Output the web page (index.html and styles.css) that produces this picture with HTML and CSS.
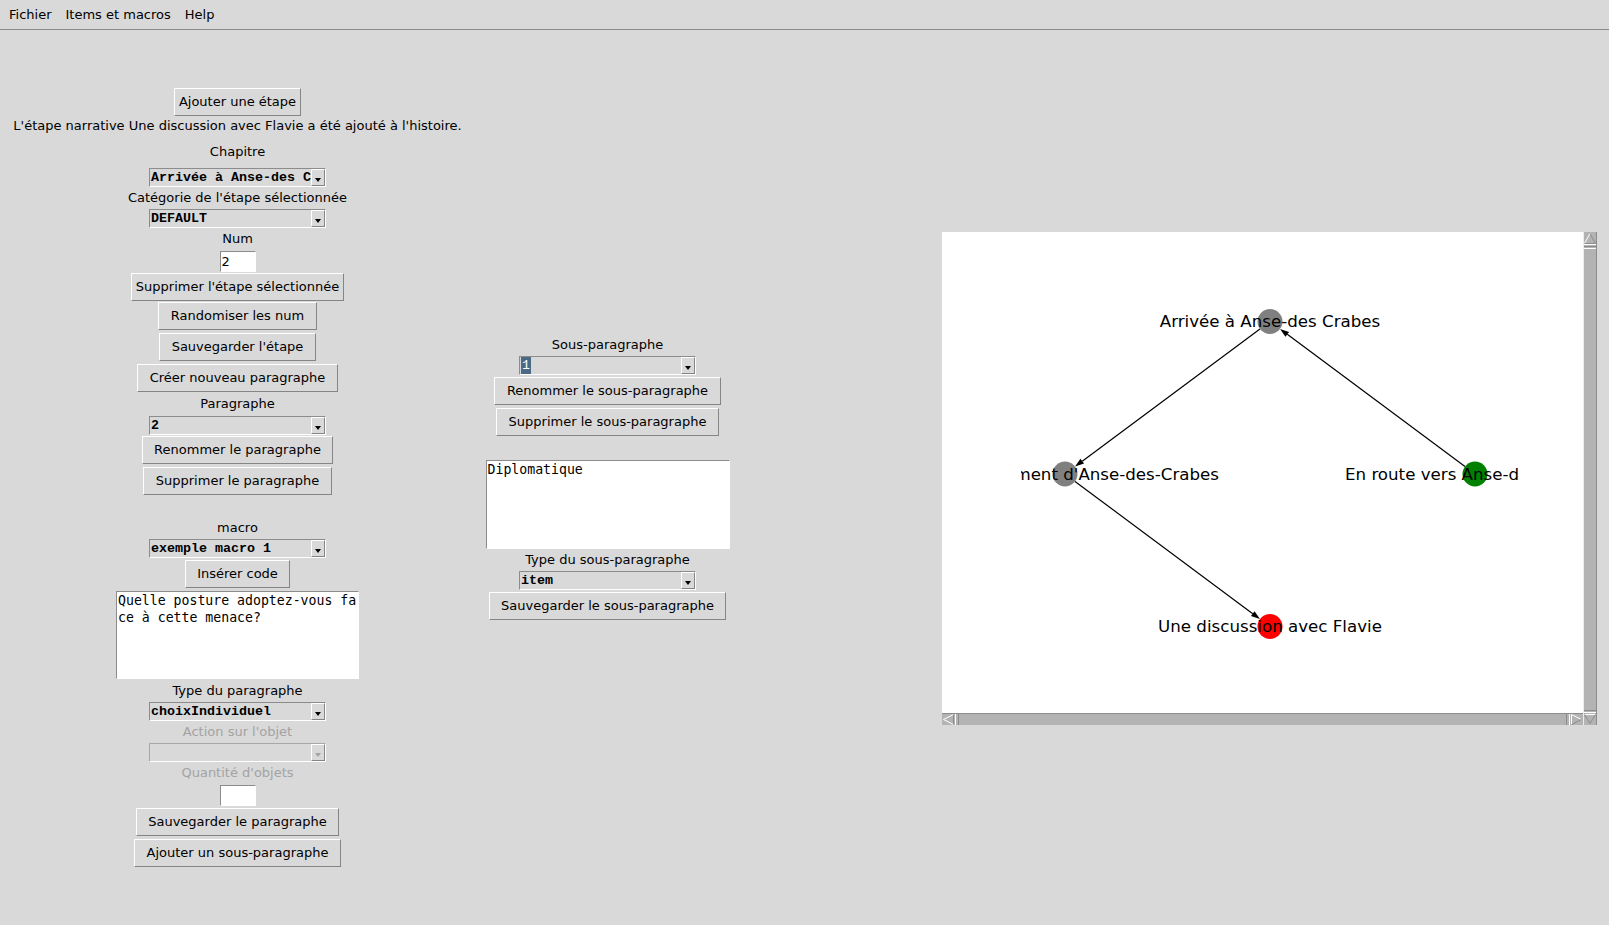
FILE: index.html
```html
<!DOCTYPE html>
<html lang="fr">
<head>
<meta charset="utf-8">
<title>Éditeur d'histoire</title>
<link rel="stylesheet" href="styles.css">
</head>
<body>
<div class="menubar">
  <span class="menu-item">Fichier</span>
  <span class="menu-item">Items et macros</span>
  <span class="menu-item">Help</span>
</div>
<div class="main">
  <div class="col left">
    <div class="btn">Ajouter une étape</div>
    <div class="lbl">L'étape narrative Une discussion avec Flavie a été ajouté à l'histoire.</div>
    <div class="lbl m6">Chapitre</div>
    <div class="combo m6"><span class="combo-text">Arrivée à Anse-des C</span><span class="combo-arrow"><span class="tri"></span></span></div>
    <div class="lbl m1">Catégorie de l'étape sélectionnée</div>
    <div class="combo m1"><span class="combo-text">DEFAULT</span><span class="combo-arrow"><span class="tri"></span></span></div>
    <div class="lbl m1">Num</div>
    <div class="entry m2">2</div>
    <div class="btn m1">Supprimer l'étape sélectionnée</div>
    <div class="btn wide m1">Randomiser les num</div>
    <div class="btn wide m3">Sauvegarder l'étape</div>
    <div class="btn wide m3">Créer nouveau paragraphe</div>
    <div class="lbl m2">Paragraphe</div>
    <div class="combo m2"><span class="combo-text">2</span><span class="combo-arrow"><span class="tri"></span></span></div>
    <div class="btn wide m1">Renommer le paragraphe</div>
    <div class="btn wide m3">Supprimer le paragraphe</div>
    <div class="lbl m23">macro</div>
    <div class="combo m1"><span class="combo-text">exemple macro 1</span><span class="combo-arrow"><span class="tri"></span></span></div>
    <div class="btn wide m2">Insérer code</div>
    <div class="text text-para m3">Quelle posture adoptez-vous face à cette menace?</div>
    <div class="lbl m2">Type du paragraphe</div>
    <div class="combo m1"><span class="combo-text">choixIndividuel</span><span class="combo-arrow"><span class="tri"></span></span></div>
    <div class="lbl disabled m1">Action sur l'objet</div>
    <div class="combo combo-disabled m1"><span class="combo-text"></span><span class="combo-arrow"><span class="tri"></span></span></div>
    <div class="lbl disabled m1">Quantité d'objets</div>
    <div class="entry m2"></div>
    <div class="btn wide m2">Sauvegarder le paragraphe</div>
    <div class="btn wide m3">Ajouter un sous-paragraphe</div>
  </div>
  <div class="col mid">
    <div class="lbl">Sous-paragraphe</div>
    <div class="combo m1"><span class="combo-text"><span class="sel">1</span></span><span class="combo-arrow"><span class="tri"></span></span></div>
    <div class="btn wide m2">Renommer le sous-paragraphe</div>
    <div class="btn wide m3">Supprimer le sous-paragraphe</div>
    <div class="text text-sub m24">Diplomatique</div>
    <div class="lbl m1">Type du sous-paragraphe</div>
    <div class="combo m1"><span class="combo-text">item</span><span class="combo-arrow"><span class="tri"></span></span></div>
    <div class="btn wide m2">Sauvegarder le sous-paragraphe</div>
  </div>
  <div class="graph">
    <div class="canvas">
      <svg width="641" height="481" viewBox="0 0 641 481">
        <svg x="79" y="0" width="503" height="481" viewBox="79 0 503 481">
          <circle cx="328" cy="89.5" r="12.5" fill="#808080"/>
          <circle cx="123" cy="242" r="12.5" fill="#808080"/>
          <circle cx="533" cy="242" r="12.5" fill="#008000"/>
          <circle cx="328" cy="394.5" r="12.5" fill="#ff0000"/>
          <g stroke="#000" stroke-width="1.2">
            <line x1="317.97" y1="96.96" x2="140.25" y2="229.17"/>
            <line x1="522.97" y1="234.54" x2="345.25" y2="102.33"/>
            <line x1="133.03" y1="249.46" x2="310.75" y2="381.67"/>
          </g>
          <g fill="#000">
            <polygon points="133.03,234.54 138.46,226.76 142.04,231.58"/>
            <polygon points="338.03,96.96 347.04,99.92 343.46,104.74"/>
            <polygon points="317.97,387.04 308.96,384.08 312.54,379.26"/>
          </g>
          <g class="node-label">
            <text x="328" y="95" text-anchor="middle">Arrivée à Anse-des Crabes</text>
            <text x="277" y="247.5" text-anchor="end">Événement d'Anse-des-Crabes</text>
            <text x="403" y="247.5" text-anchor="start">En route vers Anse-d</text>
            <text x="328" y="400" text-anchor="middle">Une discussion avec Flavie</text>
          </g>
        </svg>
      </svg>
    </div>
    <div class="vscroll">
      <svg width="14" height="493" viewBox="0 0 14 493">
        <rect x="0" y="0" width="14" height="493" fill="#b3b3b3"/>
        <line x1="0.5" y1="0" x2="0.5" y2="493" stroke="#ececec"/>
        <line x1="13.5" y1="0" x2="13.5" y2="493" stroke="#8c8c8c"/>
        <polyline points="1.5,11.5 7,1.5" fill="none" stroke="#fff"/>
        <polyline points="7,1.5 12.5,11.5 1.5,11.5" fill="none" stroke="#8c8c8c"/>
        <line x1="1" y1="12.5" x2="13" y2="12.5" stroke="#fff"/>
        <line x1="1" y1="14.5" x2="13" y2="14.5" stroke="#8c8c8c"/>
        <line x1="1" y1="16.5" x2="13" y2="16.5" stroke="#fff"/>
        <line x1="1" y1="478.5" x2="13" y2="478.5" stroke="#8c8c8c"/>
        <line x1="1" y1="480.5" x2="13" y2="480.5" stroke="#fff"/>
        <polyline points="1.5,482.5 12.5,482.5" fill="none" stroke="#fff"/>
        <polyline points="12.5,482.5 7,491.5 1.5,482.5" fill="none" stroke="#8c8c8c"/>
      </svg>
    </div>
    <div class="hscroll">
      <svg width="641" height="12" viewBox="0 0 641 12">
        <rect x="0" y="0" width="641" height="12" fill="#b3b3b3"/>
        <line x1="0" y1="0.5" x2="641" y2="0.5" stroke="#8c8c8c"/>
        <polyline points="11.5,1.5 1.5,6.5 11.5,11.5" fill="none" stroke="#fff"/>
        <line x1="11.5" y1="1.5" x2="11.5" y2="11.5" stroke="#8c8c8c"/>
        <line x1="13.5" y1="1" x2="13.5" y2="12" stroke="#fff"/>
        <line x1="16.5" y1="1" x2="16.5" y2="12" stroke="#8c8c8c"/>
        <line x1="624.5" y1="1" x2="624.5" y2="12" stroke="#8c8c8c"/>
        <line x1="627.5" y1="1" x2="627.5" y2="12" stroke="#fff"/>
        <polyline points="629.5,11.5 629.5,1.5 639.5,6.5" fill="none" stroke="#fff"/>
        <line x1="639.5" y1="6.5" x2="629.5" y2="11.5" stroke="#8c8c8c"/>
      </svg>
    </div>
  </div>
</div>
</body>
</html>
```
FILE: styles.css
```css
* {
  box-sizing: border-box;
}

body {
  margin: 0;
  width: 1609px;
  height: 925px;
  overflow: hidden;
  background: #d9d9d9;
  color: #000;
  font-family: "DejaVu Sans", sans-serif;
  font-size: 13px;
}

.menubar {
  height: 30px;
  display: flex;
  padding-left: 2px;
  border-bottom: 1px solid #8a8a8a;
}

.menu-item {
  padding: 0 7px;
  line-height: 29px;
}

.main {
  display: flex;
  align-items: flex-start;
}

.col {
  display: flex;
  flex-direction: column;
  align-items: center;
}

.left {
  width: 475px;
  padding-top: 58px;
}

.mid {
  width: 265px;
  padding-top: 305px;
}

.m1 { margin-top: 1px; }
.m2 { margin-top: 2px; }
.m3 { margin-top: 3px; }
.m6 { margin-top: 6px; }
.m23 { margin-top: 23px; }
.m24 { margin-top: 24px; }

.lbl {
  height: 20px;
  line-height: 20px;
  white-space: nowrap;
}

.lbl.disabled {
  color: #a3a3a3;
}

.btn {
  height: 28px;
  padding: 0 4px;
  border: 1px solid;
  border-color: #fff #858585 #858585 #fff;
  line-height: 26px;
  white-space: nowrap;
  background: #d9d9d9;
}

.btn.wide {
  padding: 0 11.5px;
}

.combo {
  width: 177px;
  height: 19px;
  display: flex;
  border: 1px solid;
  border-color: #8c8c8c #fff #fff #8c8c8c;
  background: #d9d9d9;
}

.combo-text {
  flex: 1;
  min-width: 0;
  overflow: hidden;
  white-space: nowrap;
  padding-left: 1px;
  font: bold 13.33px "Liberation Mono", monospace;
  line-height: 17px;
}

.sel {
  display: inline-block;
  background: #4a6984;
  color: #fff;
  font-weight: normal;
  padding: 0 1px;
  line-height: 17px;
}

.combo-arrow {
  width: 14px;
  flex: none;
  display: flex;
  justify-content: center;
  align-items: flex-end;
  padding-bottom: 3px;
  border: 1px solid;
  border-color: #fff #858585 #858585 #fff;
}

.tri {
  width: 0;
  height: 0;
  border-left: 3.5px solid transparent;
  border-right: 3.5px solid transparent;
  border-top: 4px solid #000;
}

.combo-disabled {
  border-color: #a8a8a8 #fff #fff #a8a8a8;
}

.combo-disabled .tri {
  border-top-color: #a3a3a3;
}

.entry {
  width: 36px;
  height: 21px;
  padding: 0 1px;
  line-height: 19px;
  background: #fff;
  border: 1px solid;
  border-color: #8c8c8c #fff #fff #8c8c8c;
}

.text {
  background: #fff;
  border: 1px solid;
  border-color: #8c8c8c #fff #fff #8c8c8c;
  padding: 0 0 0 1px;
  font: 13.2px "DejaVu Sans Mono", monospace;
  line-height: 17px;
  word-break: break-all;
}

.text-para {
  width: 243px;
  height: 88px;
}

.text-sub {
  width: 244px;
  height: 89px;
}

.graph {
  margin-left: 202px;
  margin-top: 202px;
  display: grid;
  grid-template-columns: 641px 14px;
  grid-template-rows: 481px 12px;
}

.canvas {
  grid-column: 1;
  grid-row: 1;
  background: #fff;
  overflow: hidden;
}

.canvas svg,
.vscroll svg,
.hscroll svg {
  display: block;
}

.vscroll {
  grid-column: 2;
  grid-row: 1 / 3;
}

.hscroll {
  grid-column: 1;
  grid-row: 2;
}

.node-label {
  font-family: "DejaVu Sans", sans-serif;
  font-size: 16.67px;
  fill: #000;
}
```
